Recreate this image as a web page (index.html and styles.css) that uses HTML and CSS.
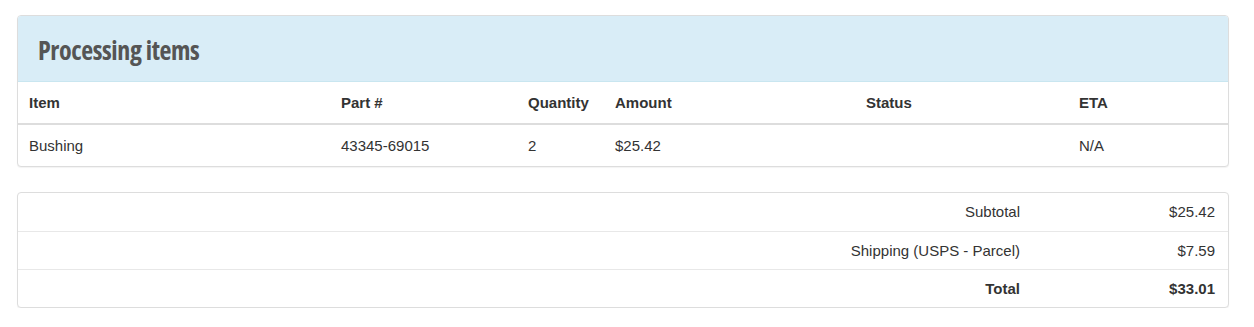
FILE: index.html
```html
<!DOCTYPE html>
<html>
<head>
<meta charset="utf-8">
<link rel="stylesheet" href="styles.css">
</head>
<body>
<div class="page">
  <section class="panel">
    <div class="panel-heading"><h2 class="panel-title">Processing items</h2></div>
    <table class="items">
      <colgroup>
        <col class="c-item"><col class="c-part"><col class="c-qty"><col class="c-amt"><col class="c-status"><col class="c-eta">
      </colgroup>
      <thead>
        <tr><th>Item</th><th>Part #</th><th>Quantity</th><th>Amount</th><th>Status</th><th>ETA</th></tr>
      </thead>
      <tbody>
        <tr><td>Bushing</td><td>43345-69015</td><td>2</td><td>$25.42</td><td></td><td>N/A</td></tr>
      </tbody>
    </table>
  </section>
  <section class="panel totals">
    <div class="row first"><div class="label">Subtotal</div><div class="value">$25.42</div></div>
    <div class="row"><div class="label">Shipping (USPS - Parcel)</div><div class="value">$7.59</div></div>
    <div class="row total"><div class="label">Total</div><div class="value">$33.01</div></div>
  </section>
</div>
</body>
</html>
```
FILE: styles.css
```css
html, body { margin: 0; padding: 0; background: #fff; }
body {
  font-family: "Liberation Sans", Arial, sans-serif;
  font-size: 15px;
  line-height: 20px;
  color: #333;
}
.page {
  padding: 15px 25px 0 17px;
}
.panel {
  border: 1px solid #ddd;
  border-radius: 4px;
  background: #fff;
  box-shadow: 0 1px 1px rgba(0,0,0,0.05);
  overflow: hidden;
}
.panel + .panel { margin-top: 25px; }
.panel-heading {
  background: #d9edf7;
  border-bottom: 1px solid #c9e6f0;
  height: 65px;
  display: flex;
  align-items: center;
  padding: 0 20px;
}
.panel-title {
  margin: 0;
  font-family: "Open Sans", sans-serif;
  font-stretch: 75%;
  font-weight: 700;
  font-size: 26px;
  letter-spacing: -0.4px;
  line-height: 30px;
  color: #555;
  position: relative;
  top: 1px;
}
.items {
  width: 100%;
  border-collapse: collapse;
  table-layout: fixed;
}
.c-item { width: 312px; }
.c-part { width: 187px; }
.c-qty { width: 87px; }
.c-amt { width: 251px; }
.c-status { width: 213px; }
.items th, .items td {
  text-align: left;
  padding: 11px 11px 10px;
  line-height: 20px;
  vertical-align: top;
}
.items th {
  font-weight: 700;
  border-bottom: 2px solid #ddd;
}
.totals .row {
  display: grid;
  grid-template-columns: 1fr 200px;
  border-top: 1px solid #e8e8e8;
}
.totals .row.first { border-top: none; }
.totals .label, .totals .value {
  text-align: right;
  padding: 9px 8px 8px;
  line-height: 20px;
}
.totals .row.first .label, .totals .row.first .value { padding-bottom: 9px; }
.totals .value { padding-right: 13px; }
.totals .total { font-weight: 700; }
```
